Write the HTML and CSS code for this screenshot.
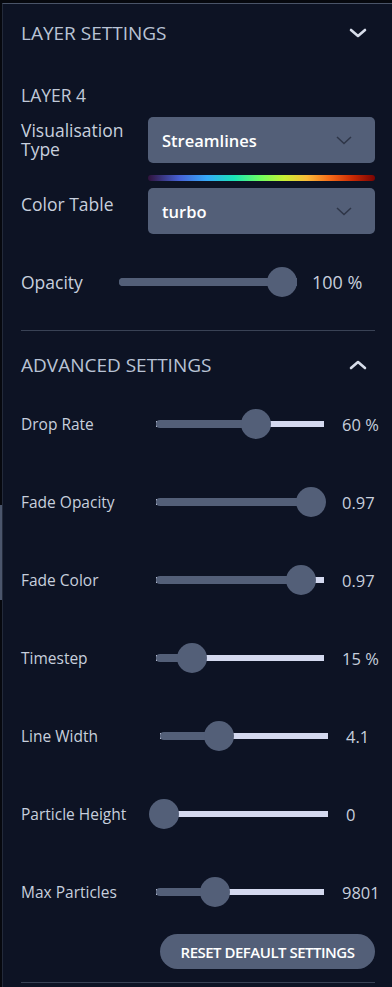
FILE: index.html
```html
<!DOCTYPE html>
<html lang="en">
<head>
    <meta charset="UTF-8">
    <meta name="viewport" content="width=device-width, initial-scale=1.0">
    <title>Layer Settings</title>
    <link rel="stylesheet" href="styles.css">
</head>
<body>
    <div class="scroll-mark"></div>
    <aside class="sidebar">
        <!-- Layer settings -->
        <div class="section-head">
            <span>Layer Settings</span>
            <svg class="toggle" width="18" height="10" viewBox="0 0 18 10"><path d="M2 2 L9 8 L16 2" /></svg>
        </div>

        <div class="layer-title">Layer 4</div>

        <div class="field-row">
            <label class="field-label">Visualisation<br>Type</label>
            <div class="select">
                <span>Streamlines</span>
                <svg width="16" height="9" viewBox="0 0 16 9"><path d="M1 1 L8 7.5 L15 1" /></svg>
            </div>
        </div>

        <div class="field-row field-row--color">
            <label class="field-label">Color Table</label>
            <div class="field-stack">
                <div class="colorbar"></div>
                <div class="select">
                    <span>turbo</span>
                    <svg width="16" height="9" viewBox="0 0 16 9"><path d="M1 1 L8 7.5 L15 1" /></svg>
                </div>
            </div>
        </div>

        <div class="slider-row slider-row--opacity">
            <span class="slider-label">Opacity</span>
            <div class="slider slider--full">
                <div class="slider-fill" style="width: 91.6%"></div>
                <div class="slider-thumb" style="left: 91.6%"></div>
            </div>
            <span class="slider-value">100 %</span>
        </div>

        <hr class="divider divider--mid">

        <!-- Advanced settings -->
        <div class="section-head section-head--advanced">
            <span>Advanced Settings</span>
            <svg class="toggle" width="18" height="10" viewBox="0 0 18 10"><path d="M2 8 L9 2 L16 8" /></svg>
        </div>

        <div class="advanced-list">
            <div class="slider-row">
                <span class="slider-label">Drop Rate</span>
                <div class="slider">
                    <div class="slider-fill" style="width: 59.5%"></div>
                    <div class="slider-thumb" style="left: 59.5%"></div>
                </div>
                <span class="slider-value">60 %</span>
            </div>
            <div class="slider-row">
                <span class="slider-label">Fade Opacity</span>
                <div class="slider">
                    <div class="slider-fill" style="width: 92.3%"></div>
                    <div class="slider-thumb" style="left: 92.3%"></div>
                </div>
                <span class="slider-value">0.97</span>
            </div>
            <div class="slider-row">
                <span class="slider-label">Fade Color</span>
                <div class="slider">
                    <div class="slider-fill" style="width: 86.6%"></div>
                    <div class="slider-thumb" style="left: 86.6%"></div>
                </div>
                <span class="slider-value">0.97</span>
            </div>
            <div class="slider-row">
                <span class="slider-label">Timestep</span>
                <div class="slider">
                    <div class="slider-fill" style="width: 21.4%"></div>
                    <div class="slider-thumb" style="left: 21.4%"></div>
                </div>
                <span class="slider-value">15 %</span>
            </div>
            <div class="slider-row slider-row--wide">
                <span class="slider-label">Line Width</span>
                <div class="slider">
                    <div class="slider-fill" style="width: 35.1%"></div>
                    <div class="slider-thumb" style="left: 35.1%"></div>
                </div>
                <span class="slider-value">4.1</span>
            </div>
            <div class="slider-row slider-row--wide">
                <span class="slider-label">Particle Height</span>
                <div class="slider">
                    <div class="slider-fill" style="width: 2.4%"></div>
                    <div class="slider-thumb" style="left: 2.4%"></div>
                </div>
                <span class="slider-value">0</span>
            </div>
            <div class="slider-row">
                <span class="slider-label">Max Particles</span>
                <div class="slider">
                    <div class="slider-fill" style="width: 35.1%"></div>
                    <div class="slider-thumb" style="left: 35.1%"></div>
                </div>
                <span class="slider-value">9801</span>
            </div>
        </div>

        <div class="actions">
            <button class="reset-button">Reset Default Settings</button>
        </div>

        <hr class="divider divider--bottom">
    </aside>
</body>
</html>
```

FILE: styles.css
```css
body {
    margin: 0;
    background: #06080e;
    font-family: 'Open Sans', 'Noto Sans', sans-serif;
    color: #c7cfdd;
    position: relative;
    min-height: 987px;
}

/* thin grey thumb on the far left edge */
.scroll-mark {
    position: absolute;
    left: 0;
    top: 505px;
    width: 2px;
    height: 95px;
    background: #4b566c;
}

.sidebar {
    margin: 3px 0 0 2px;
    min-height: 984px;
    box-sizing: border-box;
    background: #0d1324;
    border-top: 1px solid #4a5468;
    border-left: 1px solid #232a3a;
    padding: 0 17px 0 18px;
}

/* Section headers */
.section-head {
    height: 58px;
    display: flex;
    align-items: center;
    justify-content: space-between;
    font-size: 19px;
    text-transform: uppercase;
    color: #b9c3d5;
}

.section-head--advanced {
    height: 40px;
    margin-top: 14px;
}

.toggle {
    margin-right: 8px;
}

.toggle path {
    fill: none;
    stroke: #d7ddea;
    stroke-width: 2.6;
    stroke-linecap: round;
    stroke-linejoin: round;
}

.layer-title {
    margin-top: 23px;
    line-height: 20px;
    font-size: 17.5px;
    text-transform: uppercase;
    color: #c0c9d8;
}

/* Select fields */
.field-row {
    display: grid;
    grid-template-columns: 127px 1fr;
    align-items: center;
    margin-top: 12px;
}

.field-label {
    font-size: 17.5px;
    line-height: 19.5px;
}

.field-stack {
    display: flex;
    flex-direction: column;
    gap: 7px;
}

.select {
    height: 46px;
    border-radius: 5px;
    background: #535f78;
    display: flex;
    align-items: center;
    justify-content: space-between;
    padding: 0 23px 0 14px;
    color: #ffffff;
    font-size: 16.5px;
    font-weight: 600;
}

.select path {
    fill: none;
    stroke: #2e3547;
    stroke-width: 1.5;
}

.colorbar {
    height: 6px;
    border-radius: 3px;
    background: linear-gradient(to right, #30123b, #4662d7 14%, #36aaf9 26%, #1ae4b6 38%, #72fe5e 50%, #c8ef34 60%, #faba39 70%, #f66b19 80%, #ca2a04 90%, #7a0403);
}

/* Sliders */
.slider-row {
    display: grid;
    grid-template-columns: 117px 168px auto;
    column-gap: 18px;
    align-items: center;
    height: 78px;
}

.slider-row--wide {
    grid-template-columns: 121px 168px auto;
}

.slider-row--opacity {
    grid-template-columns: 83px 178px auto;
    column-gap: 15px;
    height: 30px;
    margin-top: 33px;
}

.slider-label {
    font-size: 15.5px;
    color: #c7cfdd;
    white-space: nowrap;
}

.slider-row--opacity .slider-label {
    font-size: 17.5px;
}

.slider-row--opacity .slider-value {
    font-size: 18px;
}

.slider {
    position: relative;
    height: 6px;
    background: #d4d9ef;
}

.slider--full {
    background: #535f78;
    height: 8px;
    border-radius: 4px 0 0 4px;
}

.slider-fill {
    height: 8px;
    margin-top: -1px;
    border-radius: 4px;
    background: #535f78;
}

.slider--full .slider-fill {
    margin-top: 0;
}

.slider-thumb {
    position: absolute;
    top: 50%;
    width: 30px;
    height: 30px;
    border-radius: 50%;
    background: #535f78;
    transform: translate(-50%, -50%);
}

.slider-value {
    font-size: 16.5px;
    color: #c7cfdd;
    white-space: nowrap;
}

.actions {
    display: flex;
    justify-content: flex-end;
    margin-top: 3px;
}

.reset-button {
    width: 215px;
    height: 35px;
    border: none;
    border-radius: 18px;
    background: #535f78;
    color: #ffffff;
    font-family: 'Open Sans', sans-serif;
    font-size: 15px;
    font-weight: 600;
    letter-spacing: -0.5px;
    text-transform: uppercase;
}

.divider {
    border: none;
    height: 1px;
    margin: 0;
    background: #394255;
}

.divider--mid {
    margin-top: 33px;
}

.divider--bottom {
    margin-top: 13px;
}
```
